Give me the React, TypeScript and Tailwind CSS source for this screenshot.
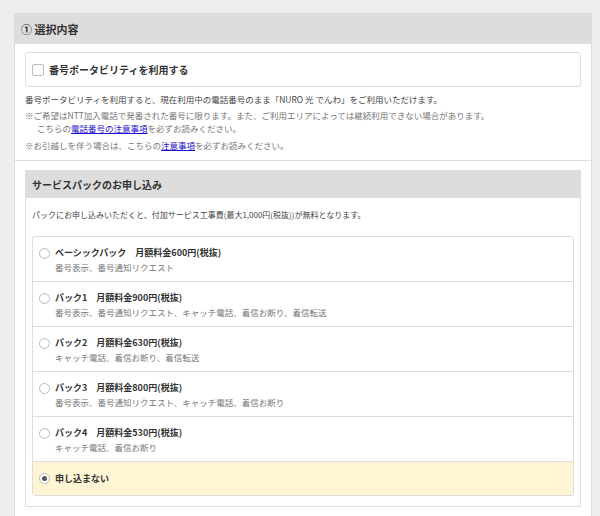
import React from "react";

const rows = [
  { t: "ベーシックパック　月額料金600円(税抜)", d: "番号表示、番号通知リクエスト" },
  { t: "パック1　月額料金900円(税抜)", d: "番号表示、番号通知リクエスト、キャッチ電話、着信お断り、着信転送" },
  { t: "パック2　月額料金630円(税抜)", d: "キャッチ電話、着信お断り、着信転送" },
  { t: "パック3　月額料金800円(税抜)", d: "番号表示、番号通知リクエスト、キャッチ電話、着信お断り" },
  { t: "パック4　月額料金530円(税抜)", d: "キャッチ電話、着信お断り" },
];

export default function App() {
  return (
    <div className="w-[600px] h-[516px] overflow-hidden bg-[#eeeeee] pt-[13px] pl-[14px] pr-[8px]" style={{ fontFamily: '"Noto Sans CJK JP", "Noto Sans", sans-serif' }}>
      <div className="bg-white border border-[#dddddd] h-[520px]">
        <div className="h-[30px] bg-[#dddddd] flex items-center px-[6px] text-[11px] font-bold text-[#333]">① 選択内容</div>
        <div className="px-[10px] pt-[8px]">
          <div className="h-[35px] border border-[#dddddd] rounded-[3px] flex items-center px-[6px] gap-[5px]">
            <div className="w-[12px] h-[12px] border border-[#bbbbbb] rounded-[2px]" />
            <span className="text-[10px] font-bold text-[#333]">番号ポータビリティを利用する</span>
          </div>
          <div className="mt-[6px] text-[8.5px] leading-[13px] text-[#444]">
            <p>番号ポータビリティを利用すると、現在利用中の電話番号のまま「NURO 光 でんわ」をご利用いただけます。</p>
            <p className="text-[#777] mt-[3px]">※ご希望はNTT加入電話で発番された番号に限ります。また、ご利用エリアによっては継続利用できない場合があります。</p>
            <p className="text-[#777] pl-[12px]">こちらの<span className="text-[#1a0dcc] underline">電話番号の注意事項</span>を必ずお読みください。</p>
            <p className="text-[#777] mt-[4px]">※お引越しを伴う場合は、こちらの<span className="text-[#1a0dcc] underline">注意事項</span>を必ずお読みください。</p>
          </div>
        </div>
        <div className="border-t border-[#dddddd] mt-[8px] px-[10px] pt-[9px]">
          <div className="border border-[#dddddd]">
            <div className="h-[27px] bg-[#dddddd] flex items-center px-[6px] text-[10px] font-bold text-[#333]">サービスパックのお申し込み</div>
            <div className="px-[6px] pb-[10px]">
              <p className="text-[8px] text-[#444] mt-[11px]">パックにお申し込みいただくと、付加サービス工事費(最大1,000円(税抜))が無料となります。</p>
              <div className="mt-[15px] border border-[#dddddd] rounded-[3px]">
                {rows.map((r) => (
                  <div key={r.t} className="h-[45px] border-b border-[#dddddd] flex items-start gap-[5px] px-[6px] pt-[9px]">
                    <div className="w-[11px] h-[11px] mt-[2px] rounded-full border border-[#bbbbbb]" />
                    <div>
                      <div className="text-[9px] font-bold text-[#333] leading-[14px]">{r.t}</div>
                      <div className="text-[8.5px] text-[#777] leading-[14px]">{r.d}</div>
                    </div>
                  </div>
                ))}
                <div className="h-[33px] bg-[#fff5d4] flex items-center gap-[5px] px-[6px]">
                  <div className="w-[11px] h-[11px] rounded-full border border-[#bbbbbb] bg-white flex items-center justify-center">
                    <div className="w-[5px] h-[5px] rounded-full bg-[#555]" />
                  </div>
                  <span className="text-[9px] font-bold text-[#333]">申し込まない</span>
                </div>
              </div>
            </div>
          </div>
        </div>
      </div>
    </div>
  );
}
